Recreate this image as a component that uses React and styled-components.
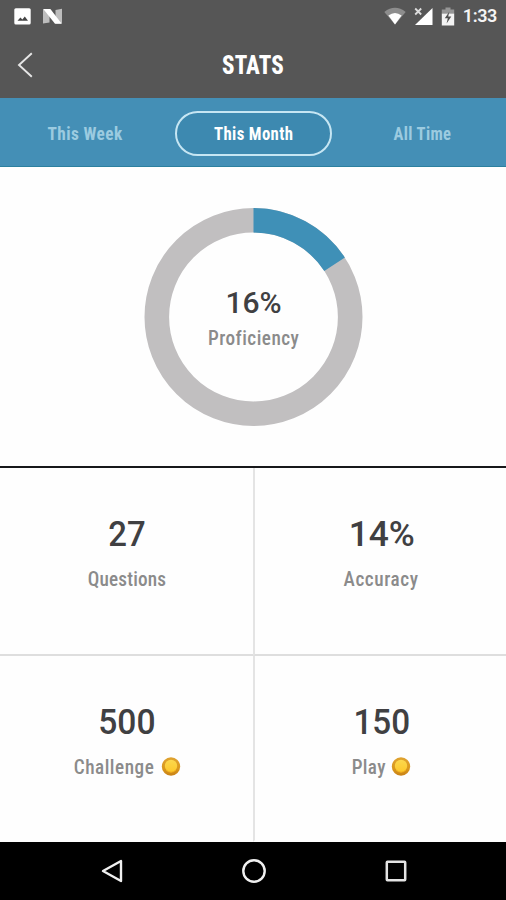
import React from 'react';
import styled, { createGlobalStyle } from 'styled-components';

const GlobalStyle = createGlobalStyle`
  *, *::before, *::after { box-sizing: border-box; }
  body { margin: 0; background: #fff; }
`;

const Screen = styled.div`
  width: 506px;
  height: 900px;
  display: flex;
  flex-direction: column;
  background: #fefefe;
  font-family: Roboto, "Liberation Sans", sans-serif;
  overflow: hidden;
`;

const Top = styled.header`
  height: 98px;
  flex: none;
  background: #565656;
`;

const StatusBar = styled.div`
  height: 32px;
  display: flex;
  align-items: center;
  justify-content: space-between;
  padding: 0 9px 0 14px;
`;

const StatusGroup = styled.div`
  display: flex;
  align-items: center;
  gap: ${(p) => p.$gap}px;
`;

const Clock = styled.span`
  font-size: 18px;
  font-weight: 600;
  line-height: 30px;
  color: #f4f4f4;
  letter-spacing: -0.4px;
`;

const TitleBar = styled.div`
  height: 64px;
  display: grid;
  grid-template-columns: 52px 1fr 52px;
  align-items: center;
`;

const BackButton = styled.button`
  border: 0;
  background: none;
  padding: 0 0 0 17px;
  height: 64px;
  display: flex;
  align-items: center;
`;

const Title = styled.h1`
  margin: 0;
  text-align: center;
  font-size: 26px;
  font-weight: 800;
  font-stretch: 75%;
  line-height: 64px;
  padding-top: 1px;
  letter-spacing: 0.2px;
  color: #fff;
  transform: scaleX(0.88);
`;

const Tabs = styled.nav`
  height: 69px;
  flex: none;
  display: grid;
  grid-template-columns: repeat(3, 1fr);
  justify-items: center;
  padding: 13px 0 0 1px;
  background: #448fb6;
  border-bottom: 1px solid #2c809f;
`;

const Tab = styled.button`
  width: 157px;
  height: 45px;
  padding: 0;
  display: flex;
  align-items: center;
  justify-content: center;
  border: 2px solid ${(p) => (p.$active ? '#c6e6f3' : 'transparent')};
  border-radius: 23px;
  background: ${(p) => (p.$active ? '#3d89b0' : 'none')};
  color: ${(p) => (p.$active ? '#fff' : '#9ccbe0')};
  font: inherit;
`;

const TabText = styled.span`
  font-size: 18px;
  font-weight: 700;
  font-stretch: 75%;
  line-height: 41px;
  letter-spacing: 0.4px;
  margin-right: -0.4px;
  white-space: nowrap;
  transform: scaleX(${(p) => p.$squeeze});
`;

const ChartPanel = styled.section`
  height: 301px;
  flex: none;
  display: grid;
  justify-items: center;
  align-items: center;
  border-bottom: 2px solid #17181a;
`;

const Donut = styled.svg`
  grid-area: 1 / 1;
  display: block;
`;

const ChartLabel = styled.div`
  grid-area: 1 / 1;
  display: flex;
  flex-direction: column;
  align-items: center;
  padding: 2px 0 0 1px;
`;

const Value = styled.div`
  font-size: ${(p) => p.$size || 35}px;
  line-height: 40px;
  font-weight: 500;
  color: #404042;
  padding-left: ${(p) => p.$inset || 0}px;
  transform: scaleX(${(p) => p.$squeeze || 1});
`;

const Label = styled.div`
  font-size: 20px;
  line-height: 30px;
  font-weight: 500;
  font-stretch: 75%;
  letter-spacing: ${(p) => p.$spacing}px;
  margin-right: -${(p) => p.$spacing}px;
  color: #8b8b8b;
  white-space: nowrap;
  transform: scaleX(0.96);
`;

const StatGrid = styled.section`
  flex: 1;
  display: grid;
  grid-template-columns: 1fr 1fr;
  grid-template-rows: 188px 1fr;
`;

const Stat = styled.div`
  display: flex;
  flex-direction: column;
  align-items: center;
  gap: 9px;
  padding-top: 47px;
  padding-left: ${(p) => (p.$right ? 1 : 0)}px;
  border-left: ${(p) => (p.$right ? '2px solid #e4e4e4' : '0')};
  border-bottom: 2px solid ${(p) => (p.$last ? 'transparent' : '#dedede')};
`;

const LabelRow = styled.div`
  display: flex;
  align-items: center;
  gap: 5px;
`;

const NavBar = styled.footer`
  height: 58px;
  flex: none;
  display: flex;
  justify-content: center;
  align-items: center;
  gap: 117px;
  padding-left: 1px;
  background: #000;
`;

const Coin = () => (
  <svg width="20" height="20" viewBox="0 0 20 20">
    <defs>
      <linearGradient id="coinRim" x1="0" y1="0" x2="0" y2="1">
        <stop offset="0" stopColor="#dfa331" />
        <stop offset="0.6" stopColor="#d9981d" />
        <stop offset="1" stopColor="#c98216" />
      </linearGradient>
      <linearGradient id="coinFace" x1="0" y1="0" x2="0" y2="1">
        <stop offset="0" stopColor="#fbd84e" />
        <stop offset="1" stopColor="#fdc82b" />
      </linearGradient>
    </defs>
    <circle cx="10" cy="9.5" r="9.2" fill="url(#coinRim)" />
    <circle cx="10" cy="9" r="6.2" fill="url(#coinFace)" />
    <path d="M5.2 13a6.5 6.5 0 0 0 9.6 0" fill="none" stroke="#f3b31e" strokeWidth="1" />
  </svg>
);

const tabs = [
  { name: 'This Week', squeeze: 0.96 },
  { name: 'This Month', squeeze: 0.93, active: true },
  { name: 'All Time', squeeze: 0.92 },
];

const stats = [
  { value: '27', label: 'Questions', squeeze: 0.94, spacing: 0.2 },
  { value: '14%', label: 'Accuracy', right: true, squeeze: 1.01, spacing: 0.6 },
  { value: '500', label: 'Challenge', coin: true, last: true, squeeze: 0.96, spacing: 0.55 },
  { value: '150', label: 'Play', coin: true, right: true, last: true, squeeze: 0.95, spacing: 0.35 },
];

const R = 96.7;
const C = 2 * Math.PI * R;

export default function App() {
  return (
    <>
      <GlobalStyle />
      <Screen>
        <Top>
          <StatusBar>
            <StatusGroup $gap={12}>
              <svg width="17" height="17" viewBox="0 0 17 17">
                <rect x="0.3" y="0.3" width="16.4" height="16.2" rx="1.5" fill="#fff" />
                <path d="M3.5 12.8 6.4 9.4 8.4 11.5 10.8 8.5 14 12.8Z" fill="#444" />
              </svg>
              <svg width="19" height="17" viewBox="0 0 19 17">
                <path d="M0 1.2h6.5v13.3L0 15.5ZM12.5 2l6.5-1.2v14.7h-6.5Z" fill="#bdbdbd" />
                <path d="M0.3 1H7.4L18.7 15.8H12Z" fill="#fff" />
              </svg>
            </StatusGroup>
            <StatusGroup $gap={8}>
              <svg width="22" height="18" viewBox="0 0 22 18">
                <path d="M0.3 5Q11-3.4 21.7 5L11 17.5Z" fill="#8d8d8d" />
                <path d="M4.4 8.6Q11 3.6 17.6 8.6L11 17.5Z" fill="#fff" />
              </svg>
              <svg width="19" height="19" viewBox="0 0 19 19">
                <path d="M18.5 1v17H1Z" fill="#fff" />
                <path d="M1.2 1.5 7.2 7.5M7.2 1.5 1.2 7.5" stroke="#ddd" strokeWidth="1.8" />
              </svg>
              <svg width="14" height="19" viewBox="0 0 14 19">
                <path d="M4.5 0.5h5v2h3.7v4H0.8v-4h3.7Z" fill="#969696" />
                <path d="M0.8 6.5h12.4v12H0.8Z" fill="#f3f3f3" />
                <path d="M8.4 4.5 3.8 11.3h3L5.6 16.5l4.7-6.9H7.2Z" fill="#505050" />
              </svg>
              <Clock>1:33</Clock>
            </StatusGroup>
          </StatusBar>
          <TitleBar>
            <BackButton aria-label="Back">
              <svg width="17" height="26" viewBox="0 0 17 26">
                <path d="M14.8 1.2 2 13l12.8 11.8" fill="none" stroke="#e6e6e6" strokeWidth="1.9" />
              </svg>
            </BackButton>
            <Title>STATS</Title>
          </TitleBar>
        </Top>
        <Tabs>
          {tabs.map((t) => (
            <Tab key={t.name} $active={t.active}>
              <TabText $squeeze={t.squeeze}>{t.name}</TabText>
            </Tab>
          ))}
        </Tabs>
        <ChartPanel>
          <Donut width="220" height="220" viewBox="0 0 220 220">
            <circle cx="110.5" cy="110" r={R} fill="none" stroke="#c1bfc0" strokeWidth="24.6" />
            <circle
              cx="110.5" cy="110" r={R} fill="none" stroke="#3f90b7" strokeWidth="24.6"
              strokeDasharray={`${C * 0.158} ${C}`} transform="rotate(-90 110.5 110)"
            />
          </Donut>
          <ChartLabel>
            <Value $size={30}>16%</Value>
            <Label $spacing={0.5}>Proficiency</Label>
          </ChartLabel>
        </ChartPanel>
        <StatGrid>
          {stats.map((s) => (
            <Stat key={s.label} $right={s.right} $last={s.last}>
              <Value $squeeze={s.squeeze} $inset={s.right ? 2 : 0}>{s.value}</Value>
              <LabelRow>
                <Label $spacing={s.spacing}>{s.label}</Label>
                {s.coin && <Coin />}
              </LabelRow>
            </Stat>
          ))}
        </StatGrid>
        <NavBar>
          <svg width="24" height="26" viewBox="0 0 24 26">
            <path d="M21 3v20L3 13Z" fill="none" stroke="#f0f0f0" strokeWidth="2.4" strokeLinejoin="round" />
          </svg>
          <svg width="26" height="26" viewBox="0 0 26 26">
            <circle cx="13" cy="13" r="10.7" fill="none" stroke="#f0f0f0" strokeWidth="2.4" />
          </svg>
          <svg width="24" height="24" viewBox="0 0 24 24">
            <rect x="2.8" y="2.8" width="18.4" height="18.4" rx="0.6" fill="none" stroke="#e4e4e4" strokeWidth="2.5" />
          </svg>
        </NavBar>
      </Screen>
    </>
  );
}
